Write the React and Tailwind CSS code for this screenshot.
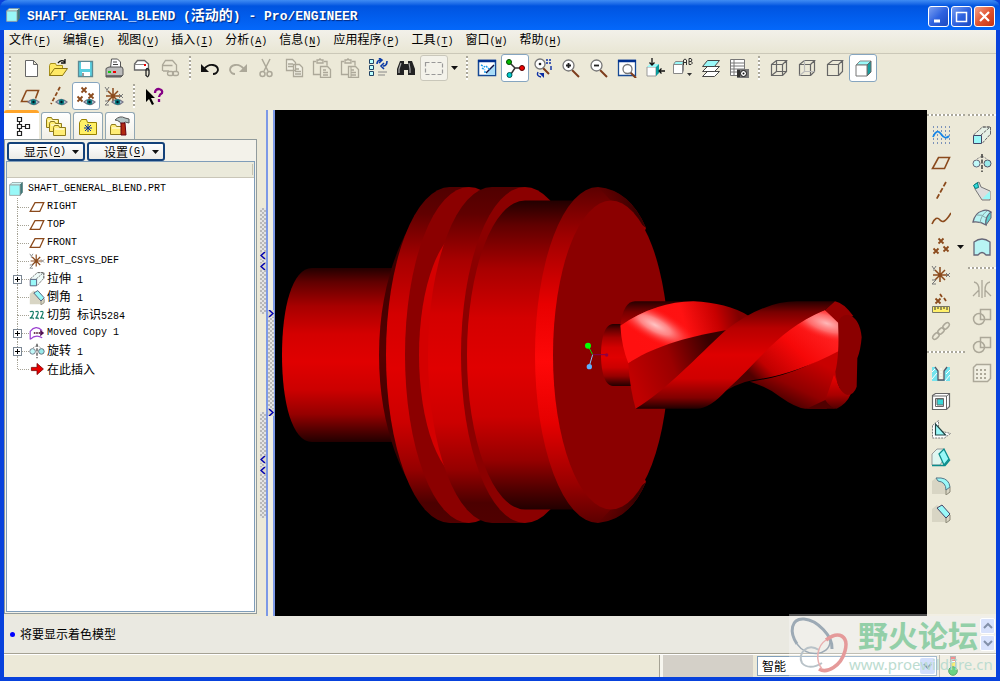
import React from "react";

const MONO = "font-['Liberation_Mono','Noto_Sans_CJK_SC',monospace]";
const CJK = "font-['Noto_Sans_CJK_SC',sans-serif]";

function Mixed({ text, latin = "text-[10px]", cjk = "text-xs" }) {
  const parts = text.match(/[\u4e00-\u9fff]+|[^\u4e00-\u9fff]+/g) || [];
  return parts.map((p, i) => (
    <span key={i} className={`whitespace-pre leading-none ${/[\u4e00-\u9fff]/.test(p) ? `${CJK} ${cjk}` : `${MONO} ${latin}`}`}>
      {p}
    </span>
  ));
}

function Key({ k }) {
  return (
    <span className={`${MONO} text-[10px] leading-none`}>
      (<u className="underline-offset-2">{k}</u>)
    </span>
  );
}

const G = "#aca899";
const B = "#8b4a1c";
const C = "#99f8f8";

const eye = (
  <g>
    <path d="M8 16q5-5 11 0q-5 5-11 0Z" fill="#dde" stroke="#778" strokeWidth="1.2" />
    <circle cx="13.5" cy="16" r="2.8" fill="#087c80" />
    <circle cx="13.5" cy="16" r="1.2" fill="#012" />
  </g>
);
const star = (
  <g stroke={B} strokeWidth="1.5">
    <path d="M9 2v15M2 10h14M4 5l10 10M14 5L4 15" />
    <path d="M1 1l2 3 2-3M3 4v2M15 8l4 4M19 8l-4 4M1 15h4l-4 4h4" stroke="#777" strokeWidth="1" />
  </g>
);
const cross = (x, y) => <path d={`M${x - 2.5} ${y - 2.5}l5 5m0-5l-5 5`} stroke={B} strokeWidth="1.8" />;
const box3 = (a) => (
  <g stroke="#666" strokeWidth="1.2">
    <path d="M2.5 6.500h11v11h-11Z M2.500 6.500l5-4h10l-4 4M17.500 2.500v11l-4 4" />
    {a === 1 && <path d="M7.500 2.500v11h10M2.500 17.500l5-4" />}
    {a === 2 && <path d="M7.500 2.500v11h10M2.500 17.500l5-4" stroke="#bbb" />}
  </g>
);
const lens = (sign) => (
  <g>
    <path d="M11 12l7 7" stroke="#7c3c1c" strokeWidth="2" />
    <circle cx="7.500" cy="7.500" r="5.500" fill="#fff" stroke="#777" strokeWidth="1.300" />
    {sign}
  </g>
);
const folder = (x, y) => (
  <g transform={`translate(${x} ${y})`}>
    <path d="M.5 2.500l1-2h4l1 2h6v8H.5Z" fill="#ffed75" stroke="#8e7b1c" />
    <path d="M2 4h9" stroke="#fff" />
  </g>
);
const clip = (
  <path d="M4 3.500H1.500v13h7M12 3.500h3v4M5 5V2h2q1-2 2 0h2v3ZM8.500 8.500h7l3 3v8h-10ZM11 12h3M11 14.500h5M11 17h5" stroke={G} strokeWidth="1.300" />
);
const plane = <path d="M7.500 4.500h11l-5 11h-12Z" stroke={B} strokeWidth="1.600" />;
const revolve = (
  <g>
    <circle cx="4.500" cy="10.500" r="3.500" fill="#c0f8f8" stroke="#667" />
    <circle cx="15.500" cy="10.500" r="3.500" fill="#9aeaea" stroke="#556" />
    <path d="M5 6l5-3 5 3" stroke="#888" strokeDasharray="2 1" />
    <path d="M10 1v18" stroke="#222" strokeWidth="1.300" strokeDasharray="4 1.500" />
  </g>
);
const extrude = (
  <g>
    <path d="M1.500 10l9-8h8v7l-8 9M9 10l8-7M11 2h7.500v8" stroke="#666" strokeDasharray="3 1" fill="#e0f8f4" fillOpacity=".5" />
    <path d="M1.500 10.500h8v8h-8Z" fill={C} stroke="#446" />
  </g>
);
const roundSolid = (chamfer) => (
  <g>
    <path d="M1 6l5-4 13 11v5l-4 1H1Z" fill="#d8d5c4" />
    <path d="M15 14v6M19 12v5l-4 3" stroke="#8b8877" />
    {chamfer ? (
      <path d="M6 5l5-3 8 9-4 4Z" fill={C} stroke="#446" />
    ) : (
      <path d="M5 3h5q8 1 9 9l-4 3q0-8-8-9Z" fill={C} stroke="#578" />
    )}
  </g>
);

const ICONS = {
  new: <path d="M5.500 2.500h8l4 4v12h-12ZM13.500 2.500v4h4" fill="#fff" stroke="#666" />,
  open: (
    <g>
      <path d="M1.500 7.500l1-2h5l1 2h6v10h-13Z" fill="#ffe965" stroke="#a89018" />
      <path d="M1.500 17.500l5-7h13l-5 7Z" fill="#ffe965" stroke="#8a7410" />
      <path d="M10 5q3-4 7-1M17 1v4h-4" stroke="#111" strokeWidth="1.300" />
    </g>
  ),
  save: (
    <g>
      <path d="M2.500 3.500h14v15h-14Z" fill="#59cfe0" stroke="#5d8a94" strokeWidth="1.300" />
      <path d="M5 4h9v7H5ZM6 14h8v4H6Z" fill="#fff" />
      <path d="M7 15v3" stroke="#333" />
    </g>
  ),
  print: (
    <g>
      <path d="M6.500 10l1-9h6l3 3v6" fill="#fff" stroke="#555" />
      <path d="M9 4h4M9 6.500h5" stroke="#444" />
      <path d="M2 10.500l3-1.500h13l1 2v6l-2 2H2Z" fill="#bbb" stroke="#555" />
      <path d="M4 14h3" stroke="#1c1" strokeWidth="2" />
      <path d="M9 14h3" stroke="#e00" strokeWidth="2" />
      <path d="M2 18h16" stroke="#555" strokeWidth="1.500" />
    </g>
  ),
  mail: (
    <g>
      <path d="M2.500 12V6l3-3.500h7l4 3.500v6Z" fill="#fff" stroke="#666" strokeWidth="1.300" />
      <path d="M2.500 6.500h11" stroke="#888" />
      <path d="M12 6h2v2h-2Z" fill="#e00" />
      <path d="M14 18v-6q1-3 3 0v4q-1 5-3 1" stroke="#222" strokeWidth="1.300" />
    </g>
  ),
  maillink: (
    <g stroke={G} strokeWidth="1.300">
      <path d="M2.500 13V7l3-4.500h7l4 4.500v6M2.500 7.500h10M3 13h6" />
      <rect x="7.500" y="13.500" width="6" height="4" rx="2" />
      <rect x="12.500" y="13.500" width="6" height="4" rx="2" />
    </g>
  ),
  undo: (
    <g>
      <path d="M4 11q4-5 9-4q5 1 5 5q-1 4-5 4" stroke="#111" strokeWidth="1.800" />
      <path d="M1 6v8h8Z" fill="#111" />
    </g>
  ),
  redo: (
    <g>
      <path d="M16 11q-4-5-9-4q-5 1-5 5q1 4 5 4" stroke={G} strokeWidth="1.800" />
      <path d="M19 6v8h-8Z" fill={G} />
    </g>
  ),
  cut: (
    <g stroke={G} strokeWidth="1.500">
      <path d="M6 1l6 12M14 1L8 13" />
      <circle cx="6.500" cy="16" r="2.500" />
      <circle cx="13.500" cy="16" r="2.500" />
    </g>
  ),
  copy: <path d="M2.500 1.500h6l3 3v8h-9ZM4 6h5M4 8.500h5M9.500 6.500h6l3 3v9h-9ZM11 11h4M11 13.500h6M11 16h6" stroke={G} strokeWidth="1.300" fill="#f2f0e4" />,
  paste: clip,
  paste2: (
    <g>
      {clip}
      <path d="M11 9v10" stroke={G} />
    </g>
  ),
  regen: (
    <g>
      <path d="M1.500 1.500h4v4h-4ZM1.500 7.500h4v4h-4ZM1.500 13.500h4v4h-4Z" fill="#bff" stroke="#246" />
      <path d="M10 14h9M10 17h7" stroke="#888" />
      <path d="M9 6q0-4 4-4M11 0l3 2-3 3M19 3q0 5-4 5M16 5l-3 3 3 3" stroke="#0b3aa5" strokeWidth="1.600" />
    </g>
  ),
  find: (
    <g>
      <path d="M4 3h4v3h4V3h4l3 8v6h-7v-5H8v5H1v-6Z" fill="#222" />
      <path d="M5 5l-2 6v4M13 5l1 6v4" stroke="#aaa" strokeWidth="1.200" />
    </g>
  ),
  select: <path d="M1.500 4.500h17v12h-17Z" stroke="#999" strokeDasharray="4 2" strokeWidth="1.200" />,
  repaint: (
    <g>
      <path d="M1.500 2.500h17v15h-17Z" fill="#fff" stroke="#174a94" strokeWidth="1.500" />
      <path d="M18 4v13H8l8-9Z" fill="#a8dcf8" />
      <path d="M1 3h18" stroke="#003090" strokeWidth="2.500" />
      <path d="M17 7l-8 8" stroke="#114" strokeWidth="1.500" />
      <path d="M4 7l4 2M5 10l3 2M9 8l4 4M7 14h3" stroke="#1b9ce9" strokeWidth="1.500" strokeDasharray="2 1" />
    </g>
  ),
  spin: (
    <g>
      <path d="M5 5l5 5h7M10 10l-4 6" stroke="#333" strokeWidth="1.500" />
      <circle cx="4" cy="4" r="2.500" fill="#0b0" stroke="#040" />
      <circle cx="17" cy="10" r="2.500" fill="#e00" stroke="#500" />
      <circle cx="4.500" cy="17" r="2.500" fill="#0cc" stroke="#055" />
    </g>
  ),
  orient: (
    <g>
      <path d="M10 10l6 6" stroke="#7c3c1c" strokeWidth="2" />
      <circle cx="7" cy="6" r="5" fill="#fff" stroke="#777" strokeWidth="1.300" />
      <circle cx="7" cy="6" r="1.300" fill="#222" />
      <path d="M13 2h2M13 5h2M16 2h2M16 5h2M18 8v4M5 14q-2 4 3 5" stroke="#0b2ea5" strokeWidth="1.400" />
      <path d="M6 15h5v5Z" fill="#0b2ea5" />
    </g>
  ),
  zin: lens(<path d="M5 7.500h5M7.500 5v5" stroke="#222" strokeWidth="1.800" />),
  zout: lens(<path d="M5 7.500h5" stroke="#222" strokeWidth="1.800" />),
  fit: (
    <g>
      <path d="M1.500 2.500h17v15h-17Z" fill="#fff" stroke="#174a94" strokeWidth="1.300" />
      <path d="M1 3h18" stroke="#003090" strokeWidth="2.500" />
      <path d="M13 14l6 6" stroke="#7c3c1c" strokeWidth="2" />
      <circle cx="10.500" cy="11" r="4.500" fill="#fff" stroke="#777" strokeWidth="1.300" />
    </g>
  ),
  refit: (
    <g>
      <path d="M2 9h9v9H2Z" fill="#fff" stroke="#999" />
      <path d="M2 9l3-3h9l-3 3Z" fill={C} />
      <path d="M11 9l3-3v9l-3 3Z" fill="#0a9b9b" />
      <path d="M7 0v7M4.500 4.500L7 7l2.500-2.500M20 13h-6M16.500 10.500L14 13l2.500 2.500" stroke="#111" strokeWidth="1.300" />
    </g>
  ),
  views: (
    <g>
      <path d="M.5 6.500h9v9h-9Z" fill="#fff" stroke="#888" />
      <path d="M.5 6.500l2-3h8l-1 3Z" fill={C} stroke="#888" />
      <path d="M10 6l1-2v8l-1 3Z" fill="#888" />
      <path d="M10.500 7V2l1.500-1 1.500 1v5M10.500 4.500h3M16 .5v6h2l1.500-1.500L18 3.500l1-1.500-1-1.500ZM16 3.500h2.500" stroke="#333" />
      <path d="M14 15h5l-2.500 3Z" fill="#333" />
    </g>
  ),
  layers: (
    <g stroke="#444">
      <path d="M1.500 18.500l5-5h12l-5 5Z" fill="#fff" />
      <path d="M1.500 13.500l5-5h12l-5 5Z" fill="#fff" />
      <path d="M1.500 8.500l5-6h12l-5 6Z" fill={C} />
    </g>
  ),
  viewmgr: (
    <g>
      <path d="M1.500 1.500h14v16h-14ZM5 2v15M2 5h13M2 8h13M2 11h13M2 14h13" fill="#fff" stroke="#777" />
      <rect x="8" y="11" width="12" height="9" fill="#777" />
      <path d="M8 12h3v7H8Z" fill="#333" />
      <circle cx="14.500" cy="15.500" r="3" fill="#fff" stroke="#111" />
      <circle cx="14.500" cy="15.500" r="1" fill="#111" />
    </g>
  ),
  wire: box3(1),
  hidden: box3(2),
  nohidden: box3(0),
  shade: (
    <g>
      <path d="M3 7l4-4h11l-4 4Z" fill={C} stroke="#888" />
      <path d="M14 7l4-4v11l-4 4Z" fill="#169d9d" stroke="#666" />
      <path d="M3 7h11v11H3Z" fill="#fff" stroke="#777" />
    </g>
  ),
  dplane: (
    <g>
      <path d="M6.500 4.500h12l-3 8M6.500 4.500l-5 11h7" stroke={B} strokeWidth="1.600" />
      {eye}
    </g>
  ),
  daxis: (
    <g>
      <path d="M12 1L3 18" stroke={B} strokeWidth="1.800" strokeDasharray="4 2" />
      {eye}
    </g>
  ),
  dpoint: (
    <g>
      {cross(8, 4)}
      {cross(4, 13)}
      {cross(15, 10)}
      {eye}
    </g>
  ),
  dcsys: (
    <g>
      {star}
      {eye}
    </g>
  ),
  help: (
    <g>
      <path d="M2 3v13l3-3 3 6 2-1-3-6h4Z" fill="#000" />
      <path d="M11 7q0-4 4-4q4 1 3 4q-3 2-3 4M15 13v3" stroke="#850085" strokeWidth="2.300" />
    </g>
  ),
  tree: <path d="M5.500 1.500h4v4h-4ZM5.500 8.500h4v4h-4ZM5.500 15.500h4v4h-4ZM13.500 8.500h4v4h-4ZM7.500 6v2M7.500 13v2M10 10.500h3" stroke="#222" strokeWidth="1.200" />,
  folders: (
    <g>
      {folder(0, 1)}
      {folder(3, 5)}
      {folder(7, 9)}
    </g>
  ),
  fav: (
    <g>
      <path d="M1.500 6.500l2-3h5l1 3h9v12h-17Z" fill="#fff066" stroke="#998100" />
      <path d="M10 8v8M6 12h8M7 9l6 6M13 9l-6 6" stroke="#0a3098" />
    </g>
  ),
  connect: (
    <g>
      {folder(0, 8)}
      <path d="M5 4q5-5 10-2l4 1v4l-4-1-3 3-2-3q-3-2-5-2Z" fill="#b4c4c4" stroke="#555" />
      <path d="M11 7h4l1 12h-5Z" fill="#b22a12" stroke="#601" />
    </g>
  ),
  sketch: (
    <g>
      <path d="M2 2h17M2 6h17M2 10h17M2 14h17M2 18h17" stroke="#0d3c9b" strokeDasharray="1 3" />
      <path d="M2 12q4-9 8-3t8 2" stroke="#1585e8" strokeWidth="1.800" />
    </g>
  ),
  plane,
  axis: <path d="M15 1L5 19" stroke={B} strokeWidth="1.800" strokeDasharray="5 2" />,
  curve: <path d="M1 15q4-9 8-4t11-7" stroke={B} strokeWidth="1.600" />,
  points: (
    <g>
      {cross(10, 4)}
      {cross(5, 14)}
      {cross(15, 12)}
    </g>
  ),
  csys: star,
  ruler: (
    <g>
      {cross(7, 8)}
      <path d="M9 1l2 3M13 5l2 3" stroke={B} strokeWidth="1.800" />
      <path d="M1.500 13.500h17v6h-17Z" fill="#fff06a" stroke="#776" />
      <path d="M4 14v3M7 14v2M10 14v3M13 14v2M16 14v3" stroke="#333" />
    </g>
  ),
  chain: (
    <g stroke={G} strokeWidth="1.500">
      <ellipse cx="15" cy="5" rx="4" ry="2.300" transform="rotate(-45 15 5)" />
      <ellipse cx="10" cy="10" rx="4" ry="2.300" transform="rotate(-45 10 10)" />
      <ellipse cx="5" cy="15" rx="4" ry="2.300" transform="rotate(-45 5 15)" />
    </g>
  ),
  hole: (
    <g>
      <path d="M1 4h18v14H1Z" fill="#74e4ee" />
      <path d="M1 9l5-5M1 16l5-6M14 18l5-6M15 11l4-4" stroke="#fff" />
      <path d="M4 4h12l-3 4v9H7V8Z" fill="#ece9d8" />
      <path d="M4 4l3 4v9h6V8l3-4" stroke="#556" strokeWidth="1.300" />
      <path d="M10 5v11" stroke="#fff" strokeDasharray="2 1" />
    </g>
  ),
  shell: (
    <g stroke="#666">
      <path d="M1.500 4.500l3-2h14v13l-3 3h-14Z" fill="#fff" strokeWidth="1.200" />
      <path d="M15.500 5v13M1.500 5h14l3-2" />
      <path d="M4.500 7.500h8v8h-8Z" fill="#fff" />
      <path d="M6 8h6.500v6H6Z" fill="#38d8d8" />
    </g>
  ),
  rib: (
    <g stroke="#777">
      <path d="M1.500 6.500l6-5v10l12 3-6 4.500h-12Z" fill="#fff" strokeDasharray="2 1" />
      <path d="M4.500 5v11h10Z" fill={C} stroke="#244" strokeWidth="1.200" />
    </g>
  ),
  draft: (
    <g stroke="#0a8c8c">
      <path d="M1 7l5-5h7v10l-4 6H1Z" fill="#dff6f0" stroke="#999" />
      <path d="M8 7l5-5 5 10-5 6Z" fill={C} strokeWidth="1.300" />
      <path d="M1 18.500h13l5-6" strokeWidth="1.600" />
    </g>
  ),
  round: roundSolid(false),
  chamfer: roundSolid(true),
  extrude,
  revolve,
  sweep: (
    <g>
      <path d="M2 4l5-3 2 5 9 4v9h-8L3 8Z" fill="#ddd" stroke="#777" />
      <path d="M1.500 4.500l4-3 1 5-3 1Z" fill="#3dd" stroke="#077" />
      <path d="M10 18l8-8v8Z" fill={C} />
    </g>
  ),
  boundary: (
    <g stroke="#667">
      <path d="M1 13q2-9 9-11q5-2 9 1q-6 5-5 13q-6-4-13-3Z" fill="#b8f4f4" strokeWidth="1.300" />
      <path d="M5 6q5-1 9 3M8 14q1-8 7-12" stroke="#8aa" />
      <path d="M14 16q-1-8 5-13v6Z" fill="#5dd0d0" />
    </g>
  ),
  style: <path d="M2 5q8-6 16 0v13h-4q-4-5-8 0H2Z" fill="#b8f4f4" stroke="#667" strokeWidth="1.300" />,
  mirror: <path d="M10 1v18M2 3q5 1 5 8l-6 6M18 3q-5 1-5 8l6 6M7 11v7M13 11v7" stroke={G} strokeWidth="1.300" />,
  merge: (
    <g stroke={G} strokeWidth="1.500">
      <path d="M8.500 2.500h10v10h-10Z" />
      <circle cx="7" cy="12" r="5.500" />
    </g>
  ),
  pattern: (
    <g stroke={G}>
      <path d="M1.500 4.500l3-3h14v14l-3 3h-14Z" fill="#f1efe2" strokeWidth="1.500" />
      <path d="M4 7h11M4 11h11M4 15h11" strokeWidth="2" strokeDasharray="2 2" />
    </g>
  ),
  part: (
    <g>
      <path d="M2 5l3-3h13l-3 3Z" fill="#d5ffff" stroke="#899" />
      <path d="M15 5l3-3v12l-3 4Z" fill="#3a7c7c" stroke="#577" />
      <path d="M2 5h13v13H2Z" fill={C} stroke="#9a9a9a" />
    </g>
  ),
  cutcopy: <path d="M1 6q6-2 4 3t-4 5q6-1 4 1M8 6q5-2 3 3t-3 5q5-1 3 1M14 6q5-2 3 3t-3 5q5-1 4 1" stroke="#167c68" strokeWidth="1.500" />,
  moved: (
    <g>
      <path d="M1.500 18V8q7-9 15-1M1.500 18q7-7 15-2" stroke="#9b3fd0" strokeWidth="1.500" />
      <path d="M6 10h10" stroke="#402" strokeWidth="2" strokeDasharray="2 1" />
      <path d="M14 6l5 4-5 4Z" fill="#501050" />
    </g>
  ),
  arrow: <path d="M3 8h7V3l8 7-8 7v-5H3Z" fill="#e80000" stroke="#700" />,
};

function Icon({ name, small }) {
  return (
    <svg viewBox="0 0 20 20" fill="none" aria-hidden="true" className={small ? "size-4 shrink-0" : "size-5 shrink-0"}>
      {ICONS[name]}
    </svg>
  );
}

function Tool({ name, on }) {
  return (
    <button
      type="button"
      aria-label={name}
      className={`flex size-7 shrink-0 items-center justify-center rounded-[3px] border ${
        on ? "border-[#86a5bf] bg-white" : "border-transparent"
      }`}
    >
      <Icon name={name} />
    </button>
  );
}

const VGrip = () => (
  <div className="mx-[5px] h-6 w-[2px] shrink-0 bg-[repeating-linear-gradient(180deg,#aaa79a_0_2px,#ffffff_2px_4px)]" />
);
const HGrip = ({ className = "my-[6px]" }) => (
  <div className={`h-[2px] w-full shrink-0 bg-[repeating-linear-gradient(90deg,#aaa79a_0_2px,#ffffff_2px_4px)] ${className}`} />
);
const Down = ({ className = "" }) => (
  <svg viewBox="0 0 7 4" className={`h-1 w-[7px] shrink-0 ${className}`} aria-hidden="true">
    <path d="M0 0h7L3.500 4Z" fill="#111" />
  </svg>
);

const MENUS = [
  ["文件", "F"], ["编辑", "E"], ["视图", "V"], ["插入", "I"], ["分析", "A"],
  ["信息", "N"], ["应用程序", "P"], ["工具", "T"], ["窗口", "W"], ["帮助", "H"],
];

const TREE = [
  ["plane", "RIGHT"], ["plane", "TOP"], ["plane", "FRONT"], ["csys", "PRT_CSYS_DEF"],
  ["extrude", "拉伸 1", true], ["chamfer", "倒角 1"], ["cutcopy", "切剪 标识5284"],
  ["moved", "Moved Copy 1", true], ["revolve", "旋转 1", true], ["arrow", "在此插入"],
];

function WinButton({ label, close, children }) {
  return (
    <button
      type="button"
      aria-label={label}
      className={`flex size-[21px] items-center justify-center rounded-[3px] border border-white bg-linear-to-br ${
        close ? "from-[#f0a088] via-[#e2532f] to-[#c23312]" : "from-[#7c9ff0] via-[#2f63e0] to-[#1c49c0]"
      }`}
    >
      <svg viewBox="0 0 15 15" fill="none" stroke="#fff" className="size-[15px]" aria-hidden="true">
        {children}
      </svg>
    </button>
  );
}

function Stops({ id, mid = "#e00000", edge = "#220000" }) {
  return (
    <linearGradient id={id} x1="0" y1="0" x2="0" y2="1">
      <stop offset="0" stopColor={edge} />
      <stop offset=".08" stopColor="#600000" />
      <stop offset=".22" stopColor="#a80000" />
      <stop offset=".38" stopColor="#d40000" />
      <stop offset=".54" stopColor={mid} />
      <stop offset=".7" stopColor="#cc0000" />
      <stop offset=".84" stopColor="#960000" />
      <stop offset=".94" stopColor="#4c0000" />
      <stop offset="1" stopColor={edge} />
    </linearGradient>
  );
}

function Model() {
  return (
    <svg viewBox="275 110 652 506" role="img" aria-label="SHAFT_GENERAL_BLEND" className="size-full">
      <defs>
        <Stops id="cyl" />
        <Stops id="rim" mid="#e00000" edge="#500000" />
        <linearGradient id="cone" x1="0" y1="0" x2="0" y2="1">
          <stop offset="0" stopColor="#5c0000" />
          <stop offset=".15" stopColor="#a00000" />
          <stop offset=".35" stopColor="#e80000" />
          <stop offset=".52" stopColor="#ff0808" />
          <stop offset=".7" stopColor="#e60000" />
          <stop offset=".88" stopColor="#9a0000" />
          <stop offset="1" stopColor="#5c0000" />
        </linearGradient>
        <linearGradient id="coneShade" gradientUnits="userSpaceOnUse" x1="598" y1="0" x2="636" y2="0">
          <stop offset="0" stopColor="#400000" stopOpacity="0" />
          <stop offset="1" stopColor="#300000" stopOpacity=".9" />
        </linearGradient>
        <linearGradient id="back" x1="0" y1="0" x2="0" y2="1">
          <stop offset="0" stopColor="#200000" />
          <stop offset=".5" stopColor="#580000" />
          <stop offset="1" stopColor="#200000" />
        </linearGradient>
        <linearGradient id="lobeA" gradientUnits="userSpaceOnUse" x1="220" y1="180" x2="530" y2="90">
          <stop offset="0" stopColor="#ff1010" />
          <stop offset=".5" stopColor="#ff1212" />
          <stop offset=".8" stopColor="#c80000" />
          <stop offset="1" stopColor="#800000" />
        </linearGradient>
        <radialGradient id="shineA" gradientUnits="userSpaceOnUse" cx="0" cy="0" r="1" gradientTransform="translate(285 135) rotate(28) scale(150 50)">
          <stop offset="0" stopColor="#ffc4c4" />
          <stop offset=".35" stopColor="#ff9090" stopOpacity=".9" />
          <stop offset="1" stopColor="#ff1010" stopOpacity="0" />
        </radialGradient>
        <linearGradient id="lobeB" gradientUnits="userSpaceOnUse" x1="210" y1="280" x2="450" y2="190">
          <stop offset="0" stopColor="#c00000" />
          <stop offset=".5" stopColor="#9a0000" />
          <stop offset="1" stopColor="#380000" />
        </linearGradient>
        <linearGradient id="band" gradientUnits="userSpaceOnUse" x1="0" y1="64" x2="0" y2="386">
          <stop offset="0" stopColor="#280000" />
          <stop offset=".1" stopColor="#780000" />
          <stop offset=".25" stopColor="#b80000" />
          <stop offset=".5" stopColor="#de0000" />
          <stop offset=".72" stopColor="#d00000" />
          <stop offset=".9" stopColor="#800000" />
          <stop offset="1" stopColor="#200000" />
        </linearGradient>
        <linearGradient id="lobeD" gradientUnits="userSpaceOnUse" x1="760" y1="120" x2="590" y2="300">
          <stop offset="0" stopColor="#ff2020" />
          <stop offset=".4" stopColor="#f60808" />
          <stop offset=".8" stopColor="#c00000" />
          <stop offset="1" stopColor="#500000" />
        </linearGradient>
        <radialGradient id="shineD" gradientUnits="userSpaceOnUse" cx="0" cy="0" r="1" gradientTransform="translate(800 130) rotate(18) scale(135 50)">
          <stop offset="0" stopColor="#ffb8b8" />
          <stop offset=".45" stopColor="#ff7878" stopOpacity=".85" />
          <stop offset="1" stopColor="#ff1010" stopOpacity="0" />
        </radialGradient>
        <linearGradient id="lobeE" gradientUnits="userSpaceOnUse" x1="760" y1="240" x2="690" y2="386">
          <stop offset="0" stopColor="#c80000" />
          <stop offset=".6" stopColor="#900000" />
          <stop offset="1" stopColor="#400000" />
        </linearGradient>
        <linearGradient id="tip" gradientUnits="userSpaceOnUse" x1="0" y1="285" x2="0" y2="386">
          <stop offset="0" stopColor="#f00000" />
          <stop offset=".6" stopColor="#a80000" />
          <stop offset="1" stopColor="#500000" />
        </linearGradient>
      </defs>

      <path d="M392 268H312C292 268 282 308 282 355S292 442 312 442H400Z" fill="url(#cyl)" />
      <path d="M450 187C420 195 379 260 379 355S420 515 450 523Z" fill="url(#back)" />
      <path d="M469 187H450A64 168 0 0 0 450 523H469Z" fill="url(#rim)" />
      <ellipse cx="469" cy="355" rx="64" ry="168" fill="#8b0000" />
      <path d="M520 229H467A48 126 0 0 0 467 481H520Z" fill="#d40000" />
      <path d="M525 187H492A64 168 0 0 0 492 523H525Z" fill="url(#rim)" />
      <ellipse cx="525" cy="355" rx="64" ry="168" fill="#8b0000" />
      <path d="M600 200.500H525A58 154.500 0 0 0 525 509.500H600Z" fill="url(#cyl)" />
      <path d="M598 187Q630 190 646 228L598 355L646 482Q630 520 598 523A63 168 0 0 1 598 187Z" fill="url(#cone)" />
      <path d="M598 187Q630 190 646 228L612 202ZM598 523Q630 520 646 482L612 508Z" fill="url(#coneShade)" />
      <ellipse cx="611" cy="355" rx="58" ry="154.500" fill="#8b0000" />
      <path d="M635 324H613C605 324 601 338 601 355S605 386 613 386H635Z" fill="url(#cyl)" />

      <g transform="translate(560 280) scale(.333333)">
        <path d="M181 137Q190 64 225 64H410L300 140Z" fill="url(#band)" />
        <path d="M181 137Q290 64 400 64Q500 68 565 107L498 155Q330 180 205 250Q185 200 181 137Z" fill="url(#lobeA)" />
        <path d="M181 137Q290 64 400 64Q500 68 565 107L498 155Q330 180 205 250Q185 200 181 137Z" fill="url(#shineA)" />
        <path d="M205 250C270 205 370 172 500 150L300 350L227 386Q210 330 205 250Z" fill="url(#lobeB)" />
        <path d="M570 305Q720 285 840 200V290L800 386H735Q705 382 660 350Q620 320 570 305Z" fill="url(#lobeE)" />
        <path d="M795 90C710 110 600 220 470 350Q530 308 580 300Q700 285 838 212L835 125Z" fill="url(#lobeD)" />
        <path d="M795 90C740 110 700 140 640 200L700 250L838 212L835 125Z" fill="url(#shineD)" />
        <path d="M227 386C320 330 410 230 498 150Q610 64 710 64H825L795 90C660 145 600 240 500 330Q450 386 410 386Z" fill="url(#band)" />
        <path d="M795 90L825 64Q850 68 880 108L836 130Z" fill="#960000" />
        <path d="M822 285L796 360Q808 386 830 386Q860 372 872 343L840 325Z" fill="url(#tip)" />
        <path d="M740 386L796 360Q808 380 828 386Z" fill="#500000" />
        <path d="M835 130Q838 104 865 104Q900 115 905 172Q902 210 892 235L890 320Q882 345 862 345Q832 335 826 275Q838 230 835 130Z" fill="#8b0000" />
        <path d="M84 197L98 224" stroke="#00e000" strokeWidth="3" />
        <path d="M98 224L88 258" stroke="#80c8ff" strokeWidth="3" />
        <path d="M98 224H140" stroke="#800050" strokeWidth="3" />
        <circle cx="84" cy="197" r="9" fill="#00ff00" />
        <circle cx="140" cy="225" r="5" fill="#900040" />
        <circle cx="88" cy="260" r="8" fill="#5cb0ff" />
      </g>
    </svg>
  );
}

function Handle({ dir, spread }) {
  const pts = dir === "left" ? "M5 0L1 3.500L5 7" : "M1 0L5 3.500L1 7";
  const arrow = (
    <svg viewBox="0 0 6 7" className="h-[7px] w-[6px] shrink-0 bg-[#d8d5cc]" fill="none" aria-hidden="true">
      <path d={pts} stroke="#0000b0" strokeWidth="1.500" />
    </svg>
  );
  return (
    <button
      type="button"
      aria-label={`${dir} splitter`}
      className={`flex h-[106px] w-[6px] flex-col items-center bg-[repeating-conic-gradient(#b8b8b8_0_25%,#e4e4e4_0_50%)] bg-size-[4px_4px] ${
        spread ? "justify-between" : "justify-center gap-1"
      }`}
    >
      {arrow}
      {arrow}
    </button>
  );
}

function PanelButton({ label, k }) {
  return (
    <button
      type="button"
      className="flex h-[19px] w-[78px] items-center justify-end rounded-[3px] border-2 border-[#14427a] bg-linear-to-b from-white to-[#ecebe6] pr-1 leading-none"
    >
      <Mixed text={label} />
      <Key k={k} />
      <Down className="ml-[6px]" />
    </button>
  );
}

function Panel() {
  return (
    <aside className="flex w-[253px] shrink-0 flex-col">
      <div role="tablist" className="flex h-[29px] items-end gap-[2px]">
        <button role="tab" aria-label="模型树" aria-selected="true" className="flex h-[29px] w-[35px] items-center justify-center rounded-t-[3px] border-t-[3px] border-[#ffa52a] bg-white">
          <Icon name="tree" />
        </button>
        {["folders", "fav", "connect"].map((n) => (
          <button key={n} role="tab" aria-label={n} className="flex h-[27px] w-[30px] items-center justify-center rounded-t-[3px] border border-b-0 border-[#91a7b4] bg-linear-to-b from-white to-[#f0efe6]">
            <Icon name={n} />
          </button>
        ))}
      </div>
      <div className="mb-[2px] flex flex-1 flex-col border border-[#919b9c] bg-[#f3f2ea] px-px pb-px">
        <div className="flex gap-[2px] px-px pt-[2px]">
          <PanelButton label="显示" k="O" />
          <PanelButton label="设置" k="G" />
        </div>
        <div className="flex flex-1 flex-col border border-[#7f9db9] bg-white">
          <div className="h-4 border-b border-[#c9c6b8] bg-[#ebeadb] py-[2px] pr-px">
            <div className="h-full border-r border-[#c5c2b2]" />
          </div>
          <div className="mt-[2px] flex h-[18px] items-center gap-1 pl-px leading-none">
            <Icon name="part" small />
            <Mixed text="SHAFT_GENERAL_BLEND.PRT" />
          </div>
          <ul className="pl-[6px]">
            {TREE.map(([icon, label, plus], i) => (
              <li key={i} className="flex h-[18px] items-center leading-none">
                <div className="flex h-full w-[9px] flex-col items-center">
                  <div className="w-0 flex-1 border-l border-dotted border-[#a5a295]" />
                  {plus && (
                    <button type="button" aria-label={`展开 ${label}`} className="flex size-[9px] shrink-0 items-center justify-center border border-[#7b8794] bg-white">
                      <svg viewBox="0 0 5 5" className="size-[5px]" aria-hidden="true">
                        <path d="M0 2.500h5M2.500 0v5" stroke="#000" />
                      </svg>
                    </button>
                  )}
                  <div className={`w-0 flex-1 ${i === TREE.length - 1 ? "" : "border-l border-dotted border-[#a5a295]"}`} />
                </div>
                <div className={`border-t border-dotted border-[#a5a295] ${plus ? "w-[7px]" : "-ml-1 w-[11px]"}`} />
                <span className="mr-[2px] flex">
                  <Icon name={icon} small />
                </span>
                <span className="flex items-baseline">
                  <Mixed text={label} />
                </span>
              </li>
            ))}
          </ul>
        </div>
      </div>
    </aside>
  );
}

function Watermark() {
  return (
    <div className="pointer-events-none absolute right-1 bottom-1 flex h-[63px] w-[207px] bg-white/30">
      <svg viewBox="0 0 60 63" className="h-full w-[60px] shrink-0" fill="none" aria-hidden="true">
        <path d="M8 30C0 18 2 4 15 5C28 6 44 22 43 35" stroke="#9daab5" strokeWidth="3" />
        <path d="M8 30C18 44 40 42 41 28C40 16 26 7 15 5" stroke="#9daab5" strokeWidth="1.500" />
        <path d="M30 36C18 28 8 40 13 49C17 54 25 54 33 49" stroke="#b8c2c8" strokeWidth="2" />
        <path d="M37 26C50 16 60 22 56 37C52 52 38 60 30 55" stroke="#e59a9a" strokeWidth="3.500" />
        <path d="M37 26C28 32 26 46 33 55" stroke="#e9b0b0" strokeWidth="1.500" />
      </svg>
      <div className="flex flex-1 flex-col">
        <p className="pl-[9px] font-['Noto_Sans_CJK_SC',sans-serif] text-[30px] leading-10 font-bold text-[#93cfa8]">野火论坛</p>
        <p className="font-['Noto_Sans','Open_Sans',sans-serif] text-[15px] leading-5 text-[#bcdcd0]">www.proewildfire.cn</p>
      </div>
    </div>
  );
}

export default function App() {
  return (
    <div className="relative flex min-h-screen flex-col overflow-hidden bg-[#0842dc] text-xs text-black">
      <header className="flex h-[30px] shrink-0 items-center rounded-t-lg bg-linear-to-b from-[#3f8cf3] via-[#0054e0] via-20% to-[#0468fb] pr-[5px] pl-[5px]">
        <Icon name="part" small />
        <h1 className="ml-[6px] flex flex-1 items-baseline leading-none font-bold text-white [text-shadow:1px_1px_1px_#052a80]">
          <Mixed text="SHAFT_GENERAL_BLEND (活动的) - Pro/ENGINEER" latin="text-[13px]" cjk="text-[14px]" />
        </h1>
        <div className="flex gap-[2px] pt-[2px]">
          <WinButton label="最小化">
            <path d="M3 12h6" strokeWidth="3" />
          </WinButton>
          <WinButton label="最大化">
            <path d="M2.500 3.500h10v9h-10Z M2 3.500h11" strokeWidth="1.500" />
          </WinButton>
          <WinButton label="关闭" close>
            <path d="M3 3l9 9M12 3l-9 9" strokeWidth="2.200" />
          </WinButton>
        </div>
      </header>

      <div className="mx-1 mb-1 flex flex-1 flex-col bg-[#ece9d8]">
        <nav className="flex h-6 items-center gap-3 border-b border-[#cbc8b8] bg-linear-to-b from-[#f2f1ea] to-[#e9e6d4] pb-1 pl-[5px]">
          {MENUS.map(([t, k]) => (
            <button key={k} type="button" className="flex items-baseline leading-none">
              <Mixed text={t} />
              <Key k={k} />
            </button>
          ))}
        </nav>

        <div className="flex h-7 items-center">
          <VGrip />
          {["new", "open", "save", "print", "mail", "maillink"].map((n) => <Tool key={n} name={n} />)}
          <VGrip />
          {["undo", "redo", "cut", "copy", "paste", "paste2", "regen", "find"].map((n) => <Tool key={n} name={n} />)}
          <button type="button" aria-label="select" className="flex h-[26px] w-7 items-center justify-center rounded-[3px] border border-[#c9c7ba] bg-[#f3f2ea]">
            <Icon name="select" />
          </button>
          <Down className="mx-[3px]" />
          <VGrip />
          {["repaint", "spin", "orient", "zin", "zout", "fit", "refit", "views", "layers", "viewmgr"].map((n) => (
            <Tool key={n} name={n} on={n === "spin"} />
          ))}
          <VGrip />
          {["wire", "hidden", "nohidden", "shade"].map((n) => <Tool key={n} name={n} on={n === "shade"} />)}
        </div>
        <div className="flex h-7 items-center">
          <VGrip />
          {["dplane", "daxis", "dpoint", "dcsys"].map((n) => <Tool key={n} name={n} on={n === "dpoint"} />)}
          <VGrip />
          <Tool name="help" />
        </div>

        <main className="flex flex-1">
          <Panel />
          <div className="ml-[3px] flex shrink-0">
            <div className="flex w-[6px] flex-col items-center justify-evenly">
              <Handle dir="left" />
              <Handle dir="left" />
            </div>
            <div className="flex w-[9px] items-center justify-center border-x-2 border-[#7d99e6] bg-[#f0eee2]">
              <Handle dir="right" spread />
            </div>
          </div>
          <section className="flex-1 bg-black">
            <Model />
          </section>
          <div className="flex w-[69px] shrink-0 gap-[3px]">
            <div className="flex w-[38px] flex-col">
              <HGrip className="mt-1 mb-[5px]" />
              {["sketch", "plane", "axis", "curve"].map((n) => <Tool key={n} name={n} />)}
              <div className="flex items-center">
                <Tool name="points" />
                <Down className="ml-[2px]" />
              </div>
              {["csys", "ruler", "chain"].map((n) => <Tool key={n} name={n} />)}
              <HGrip />
              {["hole", "shell", "rib", "draft", "round", "chamfer"].map((n) => <Tool key={n} name={n} />)}
            </div>
            <div className="flex w-7 flex-col">
              <HGrip className="mt-1 mb-[5px]" />
              {["extrude", "revolve", "sweep", "boundary", "style"].map((n) => <Tool key={n} name={n} />)}
              <HGrip />
              {["mirror", "merge", "merge", "pattern"].map((n, i) => <Tool key={i} name={n} />)}
            </div>
          </div>
        </main>

        <div className="flex h-[38px] items-center border-b border-[#a5a294] bg-[#eae9e1] pr-px pl-[6px] leading-none">
          <span className="size-[5px] rounded-full bg-[#0000ff]" />
          <p className="ml-[5px] flex-1"><Mixed text="将要显示着色模型" /></p>
          <div className="flex flex-col gap-px">
            {["M1 6l4-4 4 4", "M1 2l4 4 4-4"].map((d, i) => (
              <button key={d} type="button" aria-label={i ? "向下" : "向上"} className="flex h-4 w-[15px] items-center justify-center rounded-[2px] border border-white bg-[#c8d6fb]">
                <svg viewBox="0 0 10 8" className="h-2 w-[10px]" fill="none" aria-hidden="true">
                  <path d={d} stroke="#4d6185" strokeWidth="2" />
                </svg>
              </button>
            ))}
          </div>
        </div>
        <footer className="flex h-[23px] items-center justify-end border-t border-white">
          <div className="h-full w-1 border-l border-[#a5a294] bg-white/60" />
          <div className="h-full w-[90px] bg-[#d4d0c8]" />
          <label className="relative ml-1 flex h-5 w-[180px]">
            <span className="sr-only">过滤器</span>
            <select className={`h-5 w-full appearance-none border border-[#7f9db9] bg-white pl-1 ${CJK} text-xs leading-[18px]`}>
              <option>智能</option>
            </select>
            <span className="pointer-events-none absolute top-[2px] right-[2px] flex h-4 w-[15px] items-center justify-center rounded-[2px] bg-[#c1d2fb]">
              <svg viewBox="0 0 10 8" className="h-2 w-[9px]" fill="none" aria-hidden="true">
                <path d="M1 2l4 4 4-4" stroke="#4d6185" strokeWidth="2" />
              </svg>
            </span>
          </label>
          <div className="ml-[2px] flex h-full w-[57px] items-center border-l border-[#a5a294] pl-2">
            <svg viewBox="0 0 10 20" className="h-5 w-[10px]" aria-hidden="true">
              <rect x="2.500" y=".5" width="5" height="12" fill="#fff" stroke="#999" />
              <rect x="3" y="1" width="4" height="4" fill="#f06060" />
              <rect x="3" y="6" width="4" height="4" fill="#ffe23c" />
              <circle cx="5" cy="15" r="4.300" fill="#2cc04c" stroke="#188030" />
            </svg>
          </div>
        </footer>
      </div>
      <Watermark />
    </div>
  );
}
